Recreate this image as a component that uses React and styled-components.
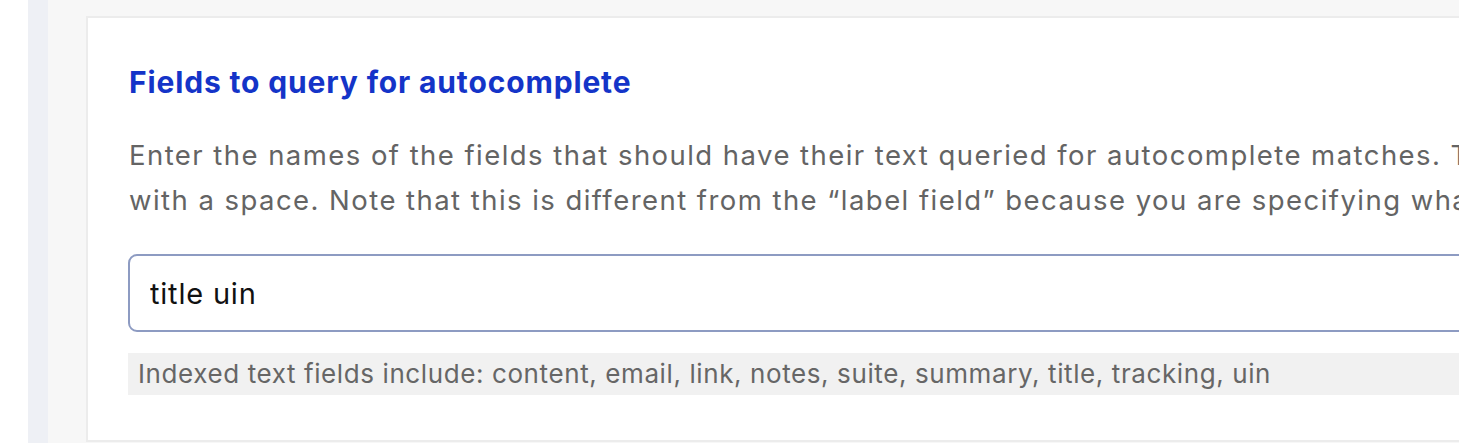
import React from 'react';
import styled, { createGlobalStyle } from 'styled-components';

const GlobalStyle = createGlobalStyle`
  html, body {
    margin: 0;
    padding: 0;
    background: #ffffff;
    overflow: hidden;
  }
  body {
    font-family: Inter, "Noto Sans", "Liberation Sans", sans-serif;
  }
`;

const Page = styled.div`
  display: flex;
  height: 443px;
  padding-left: 28px;
`;

const SideStrip = styled.div`
  width: 20px;
  flex: none;
  background: #eef0f5;
`;

const Main = styled.main`
  flex: 1;
  min-width: 0;
  overflow: hidden;
  background: #f7f7f7;
  padding: 16px 0 0 38px;
`;

const Card = styled.section`
  width: 1500px;
  height: 426px;
  box-sizing: border-box;
  background: #ffffff;
  border: 2px solid #ececec;
  padding: 44px 0 0 40px;
`;

const Title = styled.h2`
  margin: 0 0 31px 1px;
  font-size: 30px;
  line-height: 40px;
  font-weight: 700;
  color: #1434c8;
  letter-spacing: 0.85px;
`;

const Description = styled.p`
  margin: 0 0 31px 1px;
  font-size: 27.5px;
  line-height: 45px;
  color: #646464;
  letter-spacing: 1.45px;
  white-space: nowrap;
`;

const Input = styled.input`
  display: block;
  width: 1400px;
  height: 78px;
  box-sizing: border-box;
  border: 2px solid #8d9bc2;
  border-radius: 9px;
  padding: 0 20px;
  font-family: inherit;
  font-size: 29px;
  letter-spacing: 0.8px;
  color: #111111;
  background: #ffffff;
  outline: none;
`;

const Help = styled.div`
  margin-top: 21px;
  width: 1400px;
  height: 42px;
  box-sizing: border-box;
  padding: 0 10px;
  background: #f1f1f1;
  font-size: 26px;
  letter-spacing: 0.6px;
  line-height: 42px;
  color: #666666;
  white-space: nowrap;
`;

export default function App() {
  return (
    <>
      <GlobalStyle />
      <Page>
        <SideStrip />
        <Main>
          <Card>
            <Title>Fields to query for autocomplete</Title>
            <Description>
              Enter the names of the fields that should have their text queried for autocomplete matches. The names should be separated
              <br />
              with a space. Note that this is different from the “label field” because you are specifying what to search, not what to display.
            </Description>
            <Input defaultValue="title uin" />
            <Help>Indexed text fields include: content, email, link, notes, suite, summary, title, tracking, uin</Help>
          </Card>
        </Main>
      </Page>
    </>
  );
}
